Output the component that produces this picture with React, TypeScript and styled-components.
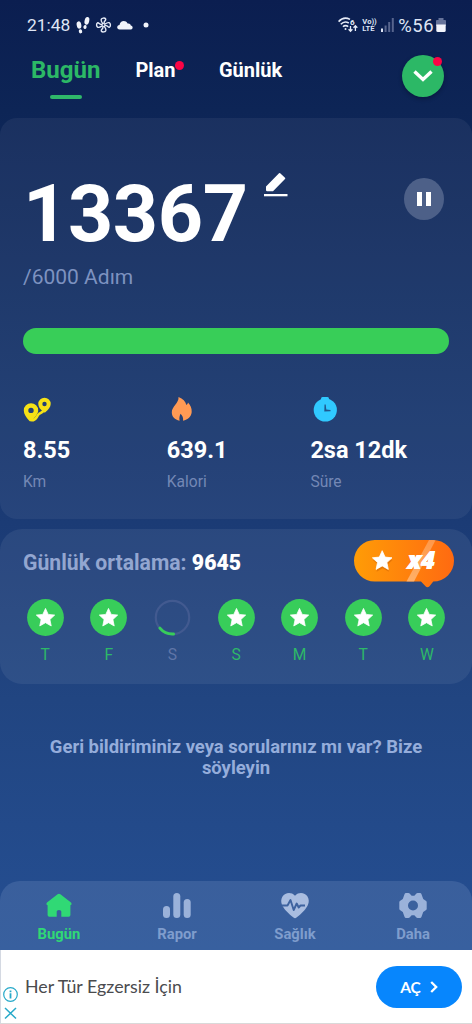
import React from "react";
import styled, { createGlobalStyle } from "styled-components";

const Global = createGlobalStyle`
  * { box-sizing: border-box; }
  body { margin: 0; font-family: Roboto, "Liberation Sans", sans-serif; }
  svg { display: block; overflow: visible; flex: none; }
`;

const Screen = styled.div`
  width: 472px;
  height: 1024px;
  display: flex;
  flex-direction: column;
  overflow: hidden;
  background: linear-gradient(180deg, #0b1e50 0, #0d2556 110px, #1b3b75 522px, #214581 700px, #254f93 950px);
`;

const StatusBar = styled.header`
  height: 50px;
  padding: 0 26px 0 27px;
  display: flex;
  align-items: center;
  justify-content: space-between;
  color: #dfe5f5;
  font-size: 17.4px;
`;

const StatusGroup = styled.div<{ $gap: number }>`
  display: flex;
  align-items: center;
  gap: ${(p) => p.$gap}px;
`;

const Percent = styled.span`
  font-size: 18.4px;
  letter-spacing: 0.5px;
`;

const VoLte = styled.div`
  font-size: 7.6px;
  line-height: 7.5px;
  font-weight: 700;
  width: 15px;
  white-space: nowrap;
`;

const TabBar = styled.nav`
  height: 68px;
  padding: 0 28px 0 31px;
  display: flex;
  align-items: flex-start;
`;

const Tab = styled.div<{ $active?: boolean; $ml?: number }>`
  position: relative;
  margin-left: ${(p) => p.$ml ?? 0}px;
  height: 49px;
  line-height: 40px;
  font-weight: 700;
  font-size: ${(p) => (p.$active ? 24 : 20)}px;
  color: ${(p) => (p.$active ? "#2cb866" : "#ffffff")};
  display: flex;
  flex-direction: column;
  align-items: center;
`;

const Underline = styled.span`
  width: 32px;
  height: 4px;
  flex: none;
  margin-top: 5px;
  border-radius: 2px;
  background: #2fb86a;
`;

const Dot = styled.i<{ $top: number; $right: number }>`
  position: absolute;
  top: ${(p) => p.$top}px;
  right: ${(p) => p.$right}px;
  width: 9px;
  height: 9px;
  border-radius: 50%;
  background: #fb0445;
`;

const RoundButton = styled.div`
  position: relative;
  width: 42px;
  height: 42px;
  margin: 5px 0 0 auto;
  border-radius: 50%;
  background: #2cb866;
  box-shadow: 0 2px 4px rgba(0, 0, 20, 0.3);
  display: grid;
  place-items: center;
`;

const Card = styled.section<{ $height: number }>`
  height: ${(p) => p.$height}px;
  flex: none;
  border-radius: 17px;
  background: rgba(255, 255, 255, 0.055);
`;

const StepsCard = styled(Card)`
  padding: 48px 23px 0;
`;

const StepRow = styled.div`
  display: flex;
  align-items: flex-start;
  height: 93px;
`;

const Steps = styled.div`
  font-size: 79px;
  line-height: 96px;
  font-weight: 700;
  color: #fff;
  letter-spacing: -0.4px;
  width: 240.5px;
`;

const PauseButton = styled.div`
  width: 40px;
  height: 42px;
  margin: 12px 5px 0 auto;
  border-radius: 50%;
  background: #4d6088;
  display: flex;
  align-items: center;
  justify-content: center;
  gap: 4px;
`;

const PauseBar = styled.span`
  width: 5px;
  height: 14px;
  background: #fff;
`;

const Goal = styled.div`
  margin-top: 6px;
  font-size: 21px;
  line-height: 25px;
  color: #7d92c0;
`;

const Progress = styled.div`
  margin-top: 37.5px;
  height: 26px;
  border-radius: 13px;
  background: #38ce58;
`;

const StatGrid = styled.div`
  margin-top: 43px;
  display: grid;
  grid-template-columns: repeat(3, 143.7px);
`;

const Stat = styled.div`
  display: flex;
  flex-direction: column;
`;

const StatValue = styled.div`
  margin-top: 14px;
  font-size: 23.5px;
  line-height: 28px;
  font-weight: 700;
  color: #fff;
`;

const StatLabel = styled.div`
  margin-top: 8px;
  font-size: 15.6px;
  line-height: 20px;
  color: #7488b5;
`;

const WeekCard = styled(Card)`
  margin-top: 10px;
  background: rgba(255, 255, 255, 0.065);
  border-radius: 22px;
`;

const WeekHead = styled.div`
  position: relative;
  height: 69.5px;
  padding: 21px 0 0 23px;
  font-size: 21.2px;
  line-height: 26px;
  font-weight: 700;
  color: #93a6d0;
  b { color: #fff; }
`;

const Bonus = styled.div`
  position: absolute;
  left: 353.5px;
  top: 10.5px;
  width: 100px;
  height: 48px;
`;

const BonusText = styled.span`
  position: absolute;
  left: 54px;
  top: 7px;
  font: italic 800 24px/26px "Open Sans", sans-serif;
  color: #fff;
  text-shadow: 0.4px 0 #fff, -0.4px 0 #fff;
`;

const Days = styled.div`
  display: flex;
  padding: 0 13.4px;
`;

const Day = styled.div<{ $done: boolean }>`
  flex: 1;
  display: flex;
  flex-direction: column;
  align-items: center;
  gap: 9px;
  font-size: 15.6px;
  line-height: 20px;
  color: ${(p) => (p.$done ? "#2db968" : "#6076a8")};
`;

const Feedback = styled.p`
  margin: 52.5px 40px 0;
  flex: 1;
  text-align: center;
  font-size: 18.45px;
  line-height: 21.5px;
  font-weight: 700;
  color: #95addb;
`;

const BottomNav = styled.nav`
  height: 69px;
  flex: none;
  border-radius: 20px 20px 0 0;
  background: linear-gradient(180deg, #3a5f9c, #38609f);
  display: grid;
  grid-template-columns: repeat(4, 1fr);
`;

const NavItem = styled.div<{ $active?: boolean }>`
  display: flex;
  flex-direction: column;
  align-items: center;
  padding-top: 12px;
  gap: 6px;
  font-size: 14.8px;
  line-height: 20px;
  font-weight: 700;
  color: ${(p) => (p.$active ? "#30d975" : "#7f9dcd")};
`;

const Ad = styled.footer`
  height: 74px;
  flex: none;
  background: #fff;
  border-left: 1px solid #d4d9e2;
  border-bottom: 1px solid #d9d9d9;
  display: flex;
  align-items: center;
  padding-right: 10px;
`;

const AdMarks = styled.div`
  width: 24px;
  padding: 33px 0 0 2px;
  display: flex;
  flex-direction: column;
  gap: 4px;
`;

const AdText = styled.div`
  flex: 1;
  padding-bottom: 2px;
  font-family: Lato, sans-serif;
  font-size: 17.8px;
  line-height: 24px;
  color: #4a4b4e;
`;

const AdButton = styled.div`
  width: 86px;
  height: 42px;
  border-radius: 21px;
  background: #0786fd;
  color: #fff;
  font: 700 15.5px Lato, sans-serif;
  display: flex;
  align-items: center;
  justify-content: center;
  gap: 9px;
`;

const STAR = "M0-10 L2.9-3.6 L9.8-2.9 L4.7 1.8 L6.1 8.7 L0 5.2 L-6.1 8.7 L-4.7 1.8 L-9.8-2.9 L-2.9-3.6Z";

const Footprints = () => (
  <svg width="14" height="17" viewBox="0 0 14 17" fill="#f1f4fb">
    <ellipse cx="3" cy="8" rx="2.3" ry="3.7" transform="rotate(-12 3 8)" />
    <ellipse cx="4.5" cy="14.3" rx="1.7" ry="2.1" transform="rotate(-12 4.5 14.3)" />
    <ellipse cx="10.9" cy="3.9" rx="2.3" ry="3.9" transform="rotate(14 10.9 3.9)" />
    <ellipse cx="9" cy="10" rx="1.6" ry="2" transform="rotate(14 9 10)" />
  </svg>
);

const Fan = () => (
  <svg width="15" height="16" viewBox="-7.5 -8 15 16" fill="none" stroke="#e6ebf7" strokeWidth="1.4">
    {[0, 90, 180, 270].map((a) => (
      <path key={a} transform={`rotate(${a})`} d="M-.4-.8 C-1.500-2.400-2.900-4-2.300-5.600 C-1.600-7.200 1.300-7.400 2.200-6 C2.800-4.800 .8-4.200 .6-2.600 L.6-.8" />
    ))}
  </svg>
);

const Cloud = () => (
  <svg width="16" height="10" viewBox="0 0 16 10" fill="#f1f4fb">
    <path d="M2.6 9.5C-.6 9.3-.5 5.3 2.5 5.1C2.8 1 8.4-.8 10.6 3.5C13 3.2 13.6 4.4 13.8 5.6C16.2 6 16.2 9.2 14 9.5Z" />
  </svg>
);

const Wifi = () => (
  <svg width="20" height="16" viewBox="0 0 20 16" fill="none" stroke="#e6ebf7" strokeWidth="1.6">
    <path d="M.6 4.6C4 .9 8.6.6 12 2.4M2.8 7.2C5.2 4.7 8.4 4.6 10.8 6M5 9.7C6.4 8.2 8.6 8.2 10.2 9.7" />
    <circle cx="7.5" cy="12" r="1" fill="#e6ebf7" stroke="none" />
    <path strokeWidth="1.3" d="M12.5 9V14M10.6 12.2L12.5 14.2L14.4 12.2M17.4 14V9M15.5 10.8L17.4 8.8L19.3 10.8" />
    <text x="12" y="7.5" fontSize="8" fontWeight="700" fill="#e6ebf7" stroke="none">6</text>
  </svg>
);

const Signal = () => (
  <svg width="13" height="14" viewBox="0 0 13 14">
    <path fill="#dfe5f5" d="M0 10.5H2V14H0Z" />
    <path fill="#57658e" d="M3.6 7.5H5.6V14H3.6ZM7.2 4H9.2V14H7.2ZM10.8 0H12.8V14H10.8Z" />
  </svg>
);

const Battery = () => (
  <svg width="10" height="14" viewBox="0 0 10 14">
    <path fill="#66739a" d="M2.5 0H7.5V2H9Q10 2 10 3V8H0V3Q0 2 1 2H2.5Z" />
    <path fill="#f3f5fc" d="M.3 6.5H9.7V12.5Q9.7 14 8.2 14H1.8Q.3 14 .3 12.5Z" />
  </svg>
);

const PencilMark = styled.svg`
  margin-top: 6px;
`;

const Pencil = () => (
  <PencilMark width="24" height="26" viewBox="0 0 24 26" fill="#fff">
    <path d="M15 1.200 Q15.600.6 16.200 1.200 L21 5.700 Q21.700 6.300 21 7 L9 19.300 H3.200 Q2 19.300 2 18.100 V14.400Z" />
    <path d="M0 22H23.5V24.3H0Z" />
  </PencilMark>
);

const RouteIcon = () => (
  <svg width="28" height="25" viewBox="0 0 28 25">
    <path d="M8.6 23.3C14 23.3 13.5 18.5 16 17C19.2 15.2 21 14.5 21.5 12" fill="none" stroke="#f6e216" strokeWidth="2.6" strokeLinecap="round" />
    <path fill="#f6e216" fillRule="evenodd" d="M8 6.200A7.200 7.200 0 0 1 15.200 13.400C15.200 17 11.800 20 8.700 23.8C7.800 24.700 6.700 24.200 6 23.400C3.400 20.400.8 17 .8 13.400A7.200 7.200 0 0 1 8 6.200ZM8 10.700A2.700 2.700 0 1 0 8 16.100A2.700 2.700 0 1 0 8 10.700Z" />
    <path fill="#f6e216" fillRule="evenodd" d="M21.500.8A6.200 6.200 0 0 1 27.700 7C27.700 10.400 25.200 12.500 22.600 15C21.300 16.200 20.300 15 19.300 14C17.300 12 15.300 10 15.300 7A6.200 6.200 0 0 1 21.500.8ZM21.500 4.800A2.200 2.200 0 1 0 21.500 9.200A2.200 2.200 0 1 0 21.500 4.800Z" />
  </svg>
);

const FlameIcon = () => (
  <svg width="28" height="25" viewBox="0 0 28 25" fill="#ff9a54">
    <path d="M11.500 0C16 1.500 18.500 4.500 19.400 8C20.300 7.600 20.800 6.500 21 5.500C23.300 8 25 11.300 24.700 15C24.300 19.500 21 22.800 16 23.700C16.700 20.800 15.200 18.800 13.600 16.800C12.600 18.800 12 21 12.600 23.700C7.700 22.700 4.900 19.700 4.800 15.500C4.600 9.500 12.200 6 11.500 0Z" />
  </svg>
);

const ClockIcon = () => (
  <svg width="28" height="25" viewBox="0 0 28 25">
    <rect x="11" y="0" width="8" height="4" rx="1.500" fill="#30c9ff" />
    <circle cx="15.300" cy="13" r="11.600" fill="#30c9ff" />
    <path d="M14.500 7.500L15.700 7.500L16.300 12.600L20.500 13V14.200L14.300 14.600Z" fill="#20578e" />
  </svg>
);

const DayBadge = ({ done }: { done: boolean }) => (
  <svg width="37" height="37" viewBox="-18.500 -18.500 37 37">
    {done ? (
      <>
        <circle r="18.400" fill="#38cd5a" />
        <path d={STAR} fill="#fff" stroke="#fff" strokeWidth=".8" strokeLinejoin="round" transform="translate(0 .3) scale(.94)" />
      </>
    ) : (
      <g fill="none" strokeLinecap="round">
        <circle r="16.700" stroke="#425a90" strokeWidth="2.200" />
        <path d="M-12.600 10.600A16.500 16.500 0 0 0 1 16.500" stroke="#38cd5a" strokeWidth="3" />
      </g>
    )}
  </svg>
);

const BonusShape = () => (
  <svg width="100" height="48" viewBox="0 0 100 48">
    <defs>
      <linearGradient id="bonusFill">
        <stop offset="0" stopColor="#ff9c06" />
        <stop offset="1" stopColor="#ff6a11" />
      </linearGradient>
      <linearGradient id="bonusShine" x1="0" y1="0" x2="0" y2="1">
        <stop offset="0" stopColor="#ffb070" stopOpacity=".6" />
        <stop offset="1" stopColor="#ffc590" stopOpacity=".7" />
      </linearGradient>
    </defs>
    <path d="M20.750 0H79.250A20.750 20.750 0 0 1 79.250 41.500L75.500 46.200Q73.500 48.200 71.500 46.200L67 41.500H20.750A20.750 20.750 0 0 1 20.750 0Z" fill="url(#bonusFill)" />
    <path d="M75 0H79.500L81.500.2L60 41.500H52.500Z" fill="url(#bonusShine)" />
    <path d={STAR} fill="#b45100" opacity=".35" transform="translate(28.700 23)" />
    <path d={STAR} fill="#fff" stroke="#fff" strokeWidth=".8" strokeLinejoin="round" transform="translate(28.200 20.700)" />
  </svg>
);

const HomeIcon = () => (
  <svg width="28" height="25" viewBox="0 0 28 25" fill="currentColor">
    <path d="M12.600 1.200Q14 .2 15.400 1.200L26 9.500Q27.500 11.600 25.400 12.300V22Q25.400 23.700 23.700 23.700H16.300V18.500Q16.300 17 14 17Q11.700 17 11.700 18.500V23.700H4.300Q2.600 23.700 2.600 22V12.300Q.5 11.600 2 9.500Z" />
  </svg>
);

const ReportIcon = () => (
  <svg width="28" height="25" viewBox="0 0 28 25" fill="#9bb2da">
    <rect x="0" y="13" width="7" height="12" rx="3.500" />
    <rect x="10.300" y="0" width="7" height="25" rx="3.500" />
    <rect x="20.700" y="6" width="7" height="19" rx="3.500" />
  </svg>
);

const HealthIcon = () => (
  <svg width="28" height="25" viewBox="0 0 28 25">
    <path fill="#a9bde0" d="M14 2.700C18-1.400 24-.3 26.500 3.600C29.600 8.800 26.500 14 23 17.700C20.300 20.500 17.500 23 15.500 24.600Q14 25.700 12.500 24.600C10.500 23 7.700 20.500 5 17.700C1.500 14-1.600 8.800 1.500 3.600C4-.3 10-1.400 14 2.700Z" />
    <path d="M1 12.500H6.500L9.500 7L12.700 17L15.700 10.500L17.700 14.500L19.500 12.500H24" fill="none" stroke="#3e639f" strokeWidth="1.900" strokeLinejoin="round" />
  </svg>
);

const GearIcon = () => (
  <svg width="28" height="25" viewBox="-14 -12.500 28 25">
    <path fill="#9bb2da" stroke="#9bb2da" strokeWidth="3" strokeLinejoin="round" d="M-7-11H-4.500L-2-8.300H2L4.500-11H7L9-5.500L12.200-3.200V3.200L9 5.500L7 11H4.500L2 8.300H-2L-4.500 11H-7L-9 5.500L-12.200 3.200V-3.200L-9-5.500Z" />
    <circle r="5" fill="#3b619e" />
  </svg>
);

const stats = [
  { icon: <RouteIcon />, value: "8.55", label: "Km" },
  { icon: <FlameIcon />, value: "639.1", label: "Kalori" },
  { icon: <ClockIcon />, value: "2sa 12dk", label: "Süre" },
];

const week = [
  { label: "T", done: true },
  { label: "F", done: true },
  { label: "S", done: false },
  { label: "S", done: true },
  { label: "M", done: true },
  { label: "T", done: true },
  { label: "W", done: true },
];

export default function App() {
  return (
    <>
      <Global />
      <Screen>
        <StatusBar>
          <StatusGroup $gap={6}>
            <span>21:48</span>
            <Footprints />
            <Fan />
            <Cloud />
            <svg width="16" height="6" viewBox="0 0 16 6"><circle cx="7" cy="3" r="2.500" fill="#f1f4fb" /></svg>
          </StatusGroup>
          <StatusGroup $gap={4}>
            <Wifi />
            <VoLte>Vo))<br />LTE</VoLte>
            <Signal />
            <StatusGroup $gap={2}>
              <Percent>%56</Percent>
              <Battery />
            </StatusGroup>
          </StatusGroup>
        </StatusBar>

        <TabBar>
          <Tab $active>Bugün<Underline /></Tab>
          <Tab $ml={35}>Plan<Dot $top={11} $right={-9} /></Tab>
          <Tab $ml={43.5}>Günlük</Tab>
          <RoundButton>
            <svg width="20" height="12" viewBox="0 0 20 12" fill="none" stroke="#fff" strokeWidth="3.400"><path d="M1.500 1.500L10 9.500L18.500 1.500" /></svg>
            <Dot $top={2} $right={2} />
          </RoundButton>
        </TabBar>

        <StepsCard $height={401}>
          <StepRow>
            <Steps>13367</Steps>
            <Pencil />
            <PauseButton><PauseBar /><PauseBar /></PauseButton>
          </StepRow>
          <Goal>/6000 Adım</Goal>
          <Progress />
          <StatGrid>
            {stats.map((s) => (
              <Stat key={s.label}>
                {s.icon}
                <StatValue>{s.value}</StatValue>
                <StatLabel>{s.label}</StatLabel>
              </Stat>
            ))}
          </StatGrid>
        </StepsCard>

        <WeekCard $height={155}>
          <WeekHead>
            Günlük ortalama: <b>9645</b>
            <Bonus><BonusShape /><BonusText>x4</BonusText></Bonus>
          </WeekHead>
          <Days>
            {week.map((d, i) => (
              <Day key={i} $done={d.done}><DayBadge done={d.done} />{d.label}</Day>
            ))}
          </Days>
        </WeekCard>

        <Feedback>Geri bildiriminiz veya sorularınız mı var? Bize söyleyin</Feedback>

        <BottomNav>
          <NavItem $active><HomeIcon />Bugün</NavItem>
          <NavItem><ReportIcon />Rapor</NavItem>
          <NavItem><HealthIcon />Sağlık</NavItem>
          <NavItem><GearIcon />Daha</NavItem>
        </BottomNav>

        <Ad>
          <AdMarks>
            <svg width="15" height="15" viewBox="0 0 15 15" fill="none" stroke="#27a9c9" strokeWidth="1.200">
              <circle cx="7.500" cy="7.500" r="6.800" />
              <path strokeWidth="1.800" d="M7.500 6.300V11.500M7.500 3.500V5.200" />
            </svg>
            <svg width="15" height="14" viewBox="0 0 15 14" stroke="#27a9c9" strokeWidth="1.500"><path d="M2 2L13 12.500M13 2L2 12.500" /></svg>
          </AdMarks>
          <AdText>Her Tür Egzersiz İçin</AdText>
          <AdButton>
            AÇ
            <svg width="8" height="12" viewBox="0 0 8 12" fill="none" stroke="#fff" strokeWidth="2.300"><path d="M1.200 1L6.200 6L1.200 11" /></svg>
          </AdButton>
        </Ad>
      </Screen>
    </>
  );
}
